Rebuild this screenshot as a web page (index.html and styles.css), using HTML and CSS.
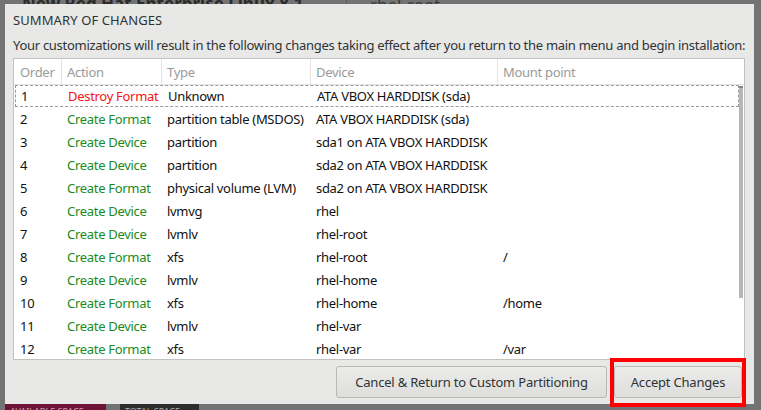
FILE: index.html
```html
<!DOCTYPE html>
<html>
<head>
<meta charset="utf-8">
<link rel="stylesheet" href="styles.css">
</head>
<body>
<div class="backdrop">
  <div class="bg-top">
    <div class="bg-title">New Red Hat Enterprise Linux 8.1</div>
    <div class="bg-sep"></div>
    <div class="bg-root">rhel-root</div>
  </div>
  <div class="bg-bottom">
    <div class="bg-avail">AVAILABLE SPACE</div>
    <div class="bg-total">TOTAL SPACE</div>
  </div>
</div>
<div class="dialog">
  <div class="title">SUMMARY OF CHANGES</div>
  <div class="desc">Your customizations will result in the following changes taking effect after you return to the main menu and begin installation:</div>
  <div class="list">
    <div class="head row">
      <div class="c c1">Order</div>
      <div class="c c2">Action</div>
      <div class="c c3">Type</div>
      <div class="c c4">Device</div>
      <div class="c c5">Mount point</div>
    </div>
    <div class="body">
      <div class="rows">
        <div class="row focus"><div class="c c1">1</div><div class="c c2 red">Destroy Format</div><div class="c c3">Unknown</div><div class="c c4">ATA VBOX HARDDISK (sda)</div><div class="c c5"></div></div>
        <div class="row"><div class="c c1">2</div><div class="c c2 green">Create Format</div><div class="c c3">partition table (MSDOS)</div><div class="c c4">ATA VBOX HARDDISK (sda)</div><div class="c c5"></div></div>
        <div class="row"><div class="c c1">3</div><div class="c c2 green">Create Device</div><div class="c c3">partition</div><div class="c c4">sda1 on ATA VBOX HARDDISK</div><div class="c c5"></div></div>
        <div class="row"><div class="c c1">4</div><div class="c c2 green">Create Device</div><div class="c c3">partition</div><div class="c c4">sda2 on ATA VBOX HARDDISK</div><div class="c c5"></div></div>
        <div class="row"><div class="c c1">5</div><div class="c c2 green">Create Format</div><div class="c c3">physical volume (LVM)</div><div class="c c4">sda2 on ATA VBOX HARDDISK</div><div class="c c5"></div></div>
        <div class="row"><div class="c c1">6</div><div class="c c2 green">Create Device</div><div class="c c3">lvmvg</div><div class="c c4">rhel</div><div class="c c5"></div></div>
        <div class="row"><div class="c c1">7</div><div class="c c2 green">Create Device</div><div class="c c3">lvmlv</div><div class="c c4">rhel-root</div><div class="c c5"></div></div>
        <div class="row"><div class="c c1">8</div><div class="c c2 green">Create Format</div><div class="c c3">xfs</div><div class="c c4">rhel-root</div><div class="c c5">/</div></div>
        <div class="row"><div class="c c1">9</div><div class="c c2 green">Create Device</div><div class="c c3">lvmlv</div><div class="c c4">rhel-home</div><div class="c c5"></div></div>
        <div class="row"><div class="c c1">10</div><div class="c c2 green">Create Format</div><div class="c c3">xfs</div><div class="c c4">rhel-home</div><div class="c c5">/home</div></div>
        <div class="row"><div class="c c1">11</div><div class="c c2 green">Create Device</div><div class="c c3">lvmlv</div><div class="c c4">rhel-var</div><div class="c c5"></div></div>
        <div class="row last"><div class="c c1">12</div><div class="c c2 green">Create Format</div><div class="c c3">xfs</div><div class="c c4">rhel-var</div><div class="c c5">/var</div></div>
      </div>
      <div class="scroll"><div class="thumb"></div></div>
    </div>
  </div>
  <div class="actions">
    <button class="btn cancel">Cancel &amp; Return to Custom Partitioning</button>
    <div class="highlight"><button class="btn accept">Accept Changes</button></div>
  </div>
</div>
</body>
</html>
```
FILE: styles.css
```css
* { box-sizing: border-box; }
html, body {
  margin: 0;
  padding: 0;
}
body {
  width: 761px;
  height: 410px;
  overflow: hidden;
  background: #737373;
  font-family: "Noto Sans", "DejaVu Sans", sans-serif;
  font-size: 13px;
  color: #2e3436;
  position: relative;
}
.backdrop {
  width: 761px;
  height: 410px;
  display: flex;
  flex-direction: column;
  justify-content: space-between;
}
.bg-top {
  display: flex;
  align-items: flex-end;
  height: 4px;
  overflow: hidden;
}
.bg-title {
  margin-left: 22px;
  font-size: 17px;
  font-weight: bold;
  color: #2b2b2b;
  line-height: 20px;
  margin-bottom: -10px;
  width: 324px;
  white-space: nowrap;
}
.bg-sep {
  width: 1px;
  height: 4px;
  background: #5a5a5a;
}
.bg-root {
  margin-left: 23px;
  font-size: 17px;
  color: #3a3a3a;
  line-height: 20px;
  margin-bottom: -11px;
}
.bg-bottom {
  display: flex;
  height: 6px;
  overflow: hidden;
}
.bg-avail {
  margin-left: 5px;
  width: 101px;
  background: #6e1237;
  color: #c9a0b0;
  font-size: 9px;
  line-height: 12px;
  padding: 2px 5px 0;
}
.bg-total {
  margin-left: 14px;
  width: 79px;
  background: #2d2d2d;
  color: #aaa;
  font-size: 9px;
  line-height: 12px;
  padding: 2px 5px 0;
}
.dialog {
  position: absolute;
  left: 5px;
  top: 4px;
  width: 749px;
  height: 400px;
  background: #e8e8e7;
  padding: 8px 9px 0 8px;
  display: flex;
  flex-direction: column;
}
.dialog > * { flex-shrink: 0; }
.title {
  font-size: 13px;
  line-height: 16px;
  height: 17px;
  letter-spacing: 0.1px;
}
.desc {
  margin-top: 8px;
  line-height: 17px;
  white-space: nowrap;
  letter-spacing: -0.29px;
}
.list {
  margin-top: 4px;
  height: 302px;
  background: #fff;
  border: 1px solid #c2c2c0;
  display: flex;
  flex-direction: column;
  overflow: hidden;
  letter-spacing: -0.3px;
}
.row {
  display: flex;
  height: 23px;
  align-items: center;
  white-space: nowrap;
  flex-shrink: 0;
}
.head {
  height: 26px;
  color: #9a9a9a;
  border-bottom: 1px solid #e4e4e4;
}
.head .c {
  height: 100%;
  display: flex;
  align-items: center;
  border-right: 1px solid #e4e4e4;
}
.head .c5 { border-right: none; }
.c { padding-left: 5px; overflow: hidden; }
.c1 { width: 48px; padding-left: 6px; }
.c2 { width: 100px; }
.c3 { width: 149px; }
.c4 { width: 187px; }
.c5 { flex: 1; }
.body {
  flex: 1;
  display: flex;
  overflow: hidden;
}
.rows {
  flex: 1;
  padding-left: 0;
  padding-top: 0;
}
.rows .row {
  color: #111;
}
.focus {
  border: 1px dashed #9a9a9a;
  height: 22px;
  margin-left: 1px;
}
.focus .c1 { width: 47px; padding-left: 5px; }
.last {
  border-bottom: 1px dashed #b5b5b5;
  height: 25px;
}
.rows .row .red { color: #f21414; }
.rows .row .green { color: #208b20; }
.scroll {
  width: 5px;
  padding-top: 1px;
}
.thumb {
  width: 4px;
  height: 212px;
  background: #b4b7b4;
  border-top: 2px dashed #888;
}
.actions {
  display: flex;
  justify-content: flex-end;
  align-items: center;
  height: 44px;
}
.btn {
  font-family: "Noto Sans", "DejaVu Sans", sans-serif;
  font-size: 13px;
  letter-spacing: -0.2px;
  color: #2e3436;
  height: 32px;
  background: linear-gradient(#ebebea, #dededc);
  border: 1px solid #b8b8b6;
  border-radius: 3px;
  padding: 0;
}
.cancel {
  width: 271px;
  margin-right: 3px;
}
.highlight {
  border: 4px solid #ff0000;
  padding: 0;
  height: 49px;
  width: 136px;
  display: flex;
  align-items: center;
  justify-content: center;
  margin-right: -1px;
}
.accept {
  width: 128px;
}
```
